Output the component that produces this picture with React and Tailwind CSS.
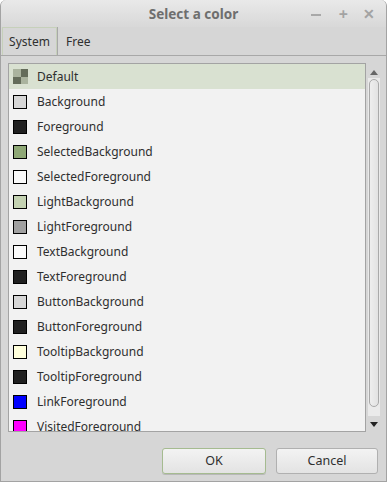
import React from 'react';

const colors = [
  ['Background', 'bg-[#d6d6d6]'],
  ['Foreground', 'bg-[#202020]'],
  ['SelectedBackground', 'bg-[#8fa876]'],
  ['SelectedForeground', 'bg-[#fafafa]'],
  ['LightBackground', 'bg-[#c4d2b2]'],
  ['LightForeground', 'bg-[#a0a0a0]'],
  ['TextBackground', 'bg-[#fafafa]'],
  ['TextForeground', 'bg-[#202020]'],
  ['ButtonBackground', 'bg-[#d6d6d6]'],
  ['ButtonForeground', 'bg-[#202020]'],
  ['TooltipBackground', 'bg-[#ffffdc]'],
  ['TooltipForeground', 'bg-[#202020]'],
  ['LinkForeground', 'bg-[#0000ff]'],
  ['VisitedForeground', 'bg-[#ff00ff]'],
];

function Row({ name, swatch }) {
  return (
    <div className="h-[25px] flex items-center pl-[4px] shrink-0">
      <div className={`w-[14px] h-[14px] border border-black ${swatch}`} />
      <span className="ml-[10px] pt-[1px] text-[12px] text-[#2f2f2f]">{name}</span>
    </div>
  );
}

export default function App() {
  return (
    <div className="w-[387px] h-[482px] flex flex-col bg-[#d6d6d6] border border-t-0 border-[#a3a3a3] rounded-t-[6px] overflow-hidden font-['Noto_Sans',sans-serif]">
      {/* title bar */}
      <div className="h-[27px] shrink-0 grid grid-cols-[1fr_auto_1fr] items-center bg-gradient-to-b from-[#e9e9e9] to-[#d8d8d8]">
        <div />
        <div className="text-[13.5px] font-bold text-[#6e6e6e] pt-[1px]">Select a color</div>
        <div className="flex justify-end items-center pr-[11px] text-[#a3a3a3] font-bold">
          <span className="w-[10px] h-[2px] bg-[#a8a8a8] mt-[3px]" />
          <span className="ml-[18px] text-[16px] leading-none">+</span>
          <span className="ml-[15px] text-[14px] leading-none">✕</span>
        </div>
      </div>

      {/* tabs */}
      <div className="h-[29px] shrink-0 flex border-b border-[#a8a8a8]">
        <div className="ml-[1px] w-[55px] flex items-center justify-center pt-[1px] border border-b-0 border-[#c6d0ba] text-[12px] text-[#2f2f2f]">
          System
        </div>
        <div className="w-[1px] bg-[#a8a8a8]" />
        <div className="pl-[8px] pt-[1px] flex items-center text-[12px] text-[#2f2f2f]">Free</div>
      </div>

      {/* list + scrollbar */}
      <div className="mt-[7px] ml-[7px] h-[369px] flex">
        <div className="w-[358px] bg-[#f2f2f2] border border-[#a3a3a3] flex flex-col overflow-hidden">
          <div className="h-[25px] flex items-center pl-[4px] shrink-0 bg-[#d9e1d1]">
            <div className="w-[15px] h-[15px] grid grid-cols-2">
              <div className="bg-[#aab39e]" />
              <div className="bg-[#646c5a]" />
              <div className="bg-[#646c5a]" />
              <div className="bg-[#aab39e]" />
            </div>
            <span className="ml-[9px] pt-[1px] text-[12px] text-[#2f2f2f]">Default</span>
          </div>
          {colors.map(([name, swatch]) => (
            <Row key={name} name={name} swatch={swatch} />
          ))}
        </div>
        <div className="w-[14px] ml-[1px] flex flex-col items-center">
          <div className="h-[12px] flex items-end">
            <svg width="8" height="5" viewBox="0 0 8 5"><path d="M0 5 L4 0 L8 5 Z" fill="#666" /></svg>
          </div>
          <div className="mt-[3px] w-[12px] flex-1 bg-[#eaeaea] flex justify-center pt-[1px] pb-[9px]">
            <div className="w-[10px] h-full rounded-full border border-[#a9a9a9] bg-gradient-to-r from-[#eeeeee] to-[#e2e2e2]" />
          </div>
          <div className="h-[16px] flex items-center">
            <svg width="8" height="5" viewBox="0 0 8 5"><path d="M0 0 L8 0 L4 5 Z" fill="#222" /></svg>
          </div>
        </div>
      </div>

      {/* buttons */}
      <div className="mt-[16px] flex justify-end gap-[10px] pr-[8px]">
        <button className="w-[104px] h-[26px] rounded-[3px] border border-[#a5bb90] bg-gradient-to-b from-[#f3f3f3] to-[#e3e3e3] text-[12.5px] text-[#2f2f2f] shadow-[0_1px_0_#b8b8b8]">
          OK
        </button>
        <button className="w-[102px] h-[26px] rounded-[3px] border border-[#b0b0b0] bg-gradient-to-b from-[#f3f3f3] to-[#e3e3e3] text-[12.5px] text-[#2f2f2f]">
          Cancel
        </button>
      </div>
    </div>
  );
}
